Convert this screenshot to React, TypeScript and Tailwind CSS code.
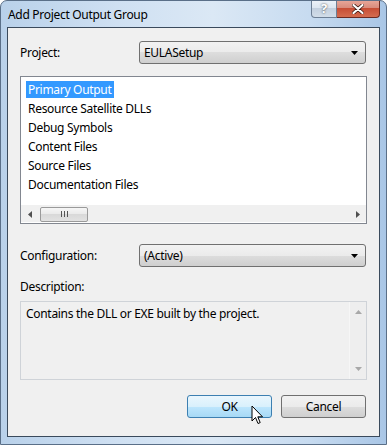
import React from "react";

const font = { fontFamily: '"Noto Sans", "Open Sans", sans-serif', letterSpacing: "-0.3px" };

function Arrow() {
  return (
    <svg width="7" height="4" viewBox="0 0 7 4" className="block">
      <path d="M0 0 H7 L3.5 4 Z" fill="#000" />
    </svg>
  );
}

function Combo({ text }: { text: string }) {
  return (
    <div className="flex items-center w-[227px] h-[23px] rounded-[3px] border border-[#707070] bg-[linear-gradient(#f2f2f2_0%,#ebebeb_50%,#dddddd_50%,#cfcfcf_100%)] pl-[4px] pr-[7px]">
      <span className="flex-1 text-[12px] text-black leading-none">{text}</span>
      <Arrow />
    </div>
  );
}

export default function App() {
  const items = [
    "Primary Output",
    "Resource Satellite DLLs",
    "Debug Symbols",
    "Content Files",
    "Source Files",
    "Documentation Files",
  ];
  return (
    <div
      style={font}
      className="relative w-[387px] h-[445px] overflow-hidden rounded-t-[7px] bg-[linear-gradient(90deg,#b9d1ea_0%,#cfe0f2_30%,#dbe8f5_55%,#c7dbf0_80%,#a9c6e6_100%)] border border-[#5a6f88] flex flex-col px-[6px] pb-[7px]"
    >
      {/* title bar */}
      <div className="relative h-[26px] flex items-center pl-[1px]">
        <span className="text-[12px] text-black leading-none mt-[2px]">Add Project Output Group</span>
        <div className="absolute right-[0px] -top-[1px] flex">
          <div className="w-[26px] h-[18px] rounded-bl-[4px] border border-[#6d7f95] border-t-0 bg-[linear-gradient(#eef3f9_0%,#dbe5f0_50%,#c3d0df_50%,#d2dde9_100%)] flex items-center justify-center text-[13px] font-bold text-white leading-none [text-shadow:0_0_2px_#333]">
            ?
          </div>
          <div className="w-[43px] h-[18px] rounded-br-[4px] border border-[#6b2a22] border-t-0 border-l-0 bg-[linear-gradient(#e9a99c_0%,#d98c7d_45%,#c74e36_50%,#d46c50_100%)] flex items-center justify-center">
            <svg width="12" height="10" viewBox="0 0 12 10">
              <path d="M1.5 1 L10.5 9 M10.5 1 L1.5 9" stroke="#3b1a14" strokeWidth="3.6" strokeLinecap="round" />
              <path d="M1.5 1 L10.5 9 M10.5 1 L1.5 9" stroke="#fff" strokeWidth="2.2" strokeLinecap="round" />
            </svg>
          </div>
        </div>
      </div>

      {/* client */}
      <div className="flex-1 border border-[#3a4a5c] bg-[#f0f0f0] flex flex-col px-[12px] text-[12px] text-black">
        <div className="flex items-center mt-[13px] h-[23px]">
          <span className="w-[119px] leading-none">Project:</span>
          <Combo text="EULASetup" />
        </div>

        {/* list */}
        <div className="mt-[12px] h-[148px] border border-[#828790] bg-white flex flex-col">
          <div className="flex-1 flex flex-col pt-[3px] pl-[5px]">
            {items.map((t, i) => (
              <div key={t} className="h-[19px] flex items-center">
                <span
                  className={
                    i === 0
                      ? "bg-[#3399ff] text-white px-[2px] h-[17px] flex items-center leading-none"
                      : "px-[2px] leading-none text-[#000]"
                  }
                >
                  {t}
                </span>
              </div>
            ))}
          </div>
          <div className="h-[17px] mx-[0px] mb-[1px] flex items-center bg-[#f0f0f0] border-t border-[#f0f0f0]">
            <div className="w-[17px] flex justify-center">
              <svg width="4" height="7" viewBox="0 0 4 7"><path d="M4 0 V7 L0 3.5 Z" fill="#505050" /></svg>
            </div>
            <div className="w-[48px] h-[15px] ml-[2px] rounded-[2px] border border-[#9a9a9a] bg-[linear-gradient(#f6f6f6_0%,#e9e9e9_50%,#d9d9d9_50%,#e2e2e2_100%)] flex items-center justify-center gap-[1px]">
              <span className="w-[1px] h-[6px] bg-[#555]" />
              <span className="w-[1px] h-[6px] bg-[#555] ml-[1px]" />
              <span className="w-[1px] h-[6px] bg-[#555] ml-[1px]" />
            </div>
            <div className="flex-1" />
            <div className="w-[17px] flex justify-center">
              <svg width="4" height="7" viewBox="0 0 4 7"><path d="M0 0 V7 L4 3.5 Z" fill="#505050" /></svg>
            </div>
          </div>
        </div>

        <div className="flex items-center mt-[20px] h-[23px]">
          <span className="w-[119px] leading-none">Configuration:</span>
          <Combo text="(Active)" />
        </div>

        <div className="mt-[14px] leading-none">Description:</div>

        <div className="mt-[8px] h-[79px] border border-[#cfd3d8] bg-[#f0f0f0] flex">
          <div className="flex-1 pt-[6px] pl-[5px] leading-none">Contains the DLL or EXE built by the project.</div>
          <div className="w-[17px] flex flex-col items-center justify-between py-[8px] bg-[#eeeeee] border-l border-[#f6f6f6]">
            <svg width="7" height="4" viewBox="0 0 7 4"><path d="M0 4 H7 L3.5 0 Z" fill="#a8a8a8" /></svg>
            <svg width="7" height="4" viewBox="0 0 7 4"><path d="M0 0 H7 L3.5 4 Z" fill="#a8a8a8" /></svg>
          </div>
        </div>

        <div className="mt-[15px] flex justify-end gap-[9px] pr-[1px]">
          <div className="relative w-[85px] h-[23px] rounded-[3px] border border-[#3c7fb1] bg-[linear-gradient(#eaf6fd_0%,#d9f0fc_50%,#bee6fd_50%,#a7d9f5_100%)] flex items-center justify-center leading-none">
            OK
          </div>
          <div className="w-[85px] h-[23px] rounded-[3px] border border-[#707070] bg-[linear-gradient(#f2f2f2_0%,#ebebeb_50%,#dddddd_50%,#cfcfcf_100%)] flex items-center justify-center leading-none">
            Cancel
          </div>
        </div>
      </div>

      {/* mouse cursor */}
      <svg className="absolute left-[250px] top-[404px]" width="13" height="21" viewBox="0 0 13 21">
        <path d="M1 1 V16 L4.5 12.5 L7 18.5 L9.2 17.6 L6.8 11.8 H11.5 Z" fill="#fff" stroke="#000" strokeWidth="1" strokeLinejoin="round" />
      </svg>
    </div>
  );
}
